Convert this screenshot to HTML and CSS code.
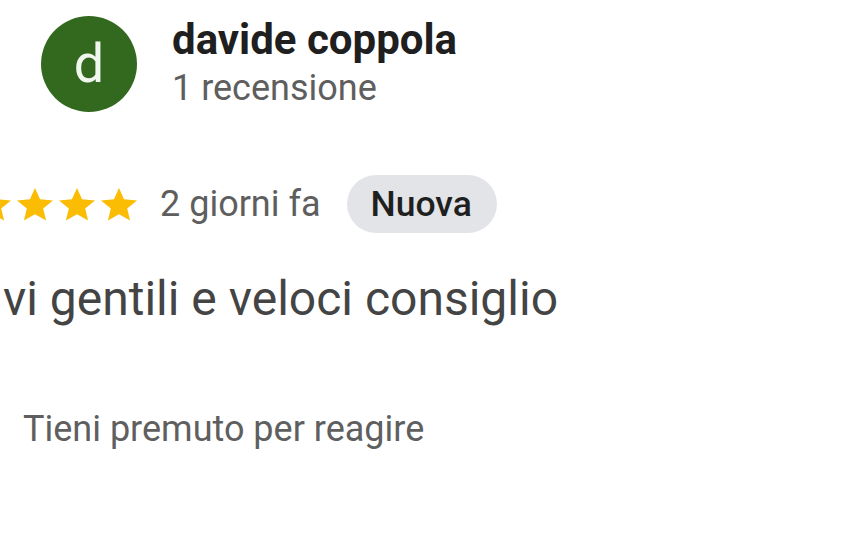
FILE: index.html
```html
<!DOCTYPE html>
<html lang="it">
<head>
<meta charset="utf-8">
<title>Recensione</title>
<link rel="stylesheet" href="styles.css">
</head>
<body>
<div class="review">
  <div class="header">
    <div class="avatar">d</div>
    <div class="author">
      <div class="name">davide coppola</div>
      <div class="count">1 recensione</div>
    </div>
  </div>
  <div class="meta">
    <div class="stars">
      <svg class="star" viewBox="2 2 20 19.27" preserveAspectRatio="none"><path d="M12 17.27L18.18 21l-1.64-7.03L22 9.24l-7.19-.61L12 2 9.19 8.630 2 9.24l5.46 4.73L5.82 21z"/></svg>
      <svg class="star" viewBox="2 2 20 19.27" preserveAspectRatio="none"><path d="M12 17.27L18.18 21l-1.64-7.03L22 9.24l-7.19-.61L12 2 9.19 8.630 2 9.24l5.46 4.73L5.82 21z"/></svg>
      <svg class="star" viewBox="2 2 20 19.27" preserveAspectRatio="none"><path d="M12 17.27L18.18 21l-1.64-7.03L22 9.24l-7.19-.61L12 2 9.19 8.630 2 9.24l5.46 4.73L5.82 21z"/></svg>
      <svg class="star" viewBox="2 2 20 19.27" preserveAspectRatio="none"><path d="M12 17.27L18.18 21l-1.64-7.03L22 9.24l-7.19-.61L12 2 9.19 8.630 2 9.24l5.46 4.73L5.82 21z"/></svg>
      <svg class="star" viewBox="2 2 20 19.27" preserveAspectRatio="none"><path d="M12 17.27L18.18 21l-1.64-7.03L22 9.24l-7.19-.61L12 2 9.19 8.630 2 9.24l5.46 4.73L5.82 21z"/></svg>
    </div>
    <span class="time">2 giorni fa</span>
    <span class="chip">Nuova</span>
  </div>
  <p class="text">vi gentili e veloci consiglio</p>
  <p class="hint">Tieni premuto per reagire</p>
</div>
</body>
</html>
```
FILE: styles.css
```css
html, body {
  margin: 0;
  padding: 0;
  background: #ffffff;
}
body {
  width: 850px;
  height: 535px;
  overflow: hidden;
  font-family: Roboto, "Noto Sans", sans-serif;
}
.review {
  display: flex;
  flex-direction: column;
}
.header {
  display: flex;
  align-items: flex-start;
  padding: 16px 0 0 41px;
  gap: 35px;
}
.avatar {
  width: 96px;
  height: 96px;
  border-radius: 50%;
  background: #33691e;
  color: #f1f6ee;
  font-size: 54px;
  line-height: 96px;
  text-align: center;
  flex: none;
}
.author {
  display: flex;
  flex-direction: column;
}
.name {
  font-size: 42px;
  font-weight: 700;
  line-height: 48px;
  color: #1f1f1f;
}
.count {
  margin-top: 2px;
  font-size: 36px;
  line-height: 44px;
  color: #5e5e5e;
}
.meta {
  display: flex;
  align-items: center;
  margin: 63px 0 0 -67px;
  height: 58px;
}
.stars {
  display: flex;
  gap: 6px;
}
.star {
  width: 36px;
  height: 33px;
  fill: #fbbc04;
}
.time {
  margin-left: 23px;
  font-size: 36px;
  line-height: 44px;
  color: #5e5e5e;
}
.chip {
  margin-left: 26px;
  height: 58px;
  padding: 0 25px 0 24px;
  border-radius: 29px;
  background: #e2e4e7;
  color: #1f1f1f;
  font-size: 35.5px;
  font-weight: 500;
  line-height: 58px;
}
.text {
  margin: 38px 0 0 3px;
  font-size: 48px;
  line-height: 56px;
  color: #444444;
}
.hint {
  margin: 80px 0 0 23px;
  font-size: 36px;
  line-height: 44px;
  color: #5f5f5f;
}
```
